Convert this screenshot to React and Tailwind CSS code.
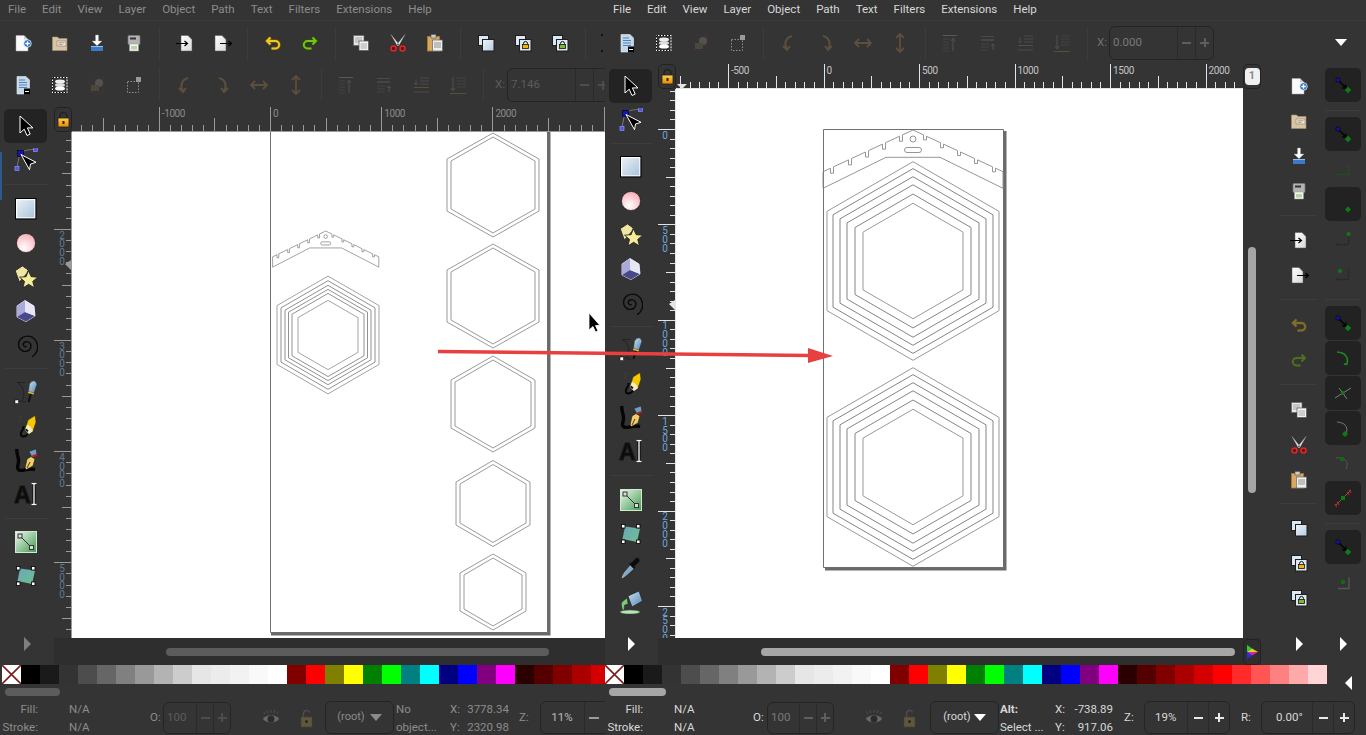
import React from "react";

const FONT = "font-['Roboto','Noto_Sans',sans-serif]";

const S = ({ children, s = 24, cls = "" }) => (
  <svg width={s} height={s} viewBox="0 0 24 24" className={"block shrink-0 " + cls}>{children}</svg>
);

/* ---------- command icons ---------- */
const New = () => <S><path d="M5 4.500h8l4 4v11.500H5z" fill="#fafafa" stroke="#aaa" strokeWidth=".5" /><path d="M13 4.500v4h4" fill="#ccc" /><circle cx="16.500" cy="12.500" r="3.800" fill="#2f73bd" stroke="#fff" strokeWidth=".7" /><path d="M14.300 12.500h4.400M16.500 10.300v4.400" stroke="#fff" strokeWidth="1.300" /></S>;
const Open = () => <S><path d="M4.500 8V6h5l1.500 1.500h8v12h-14.500z" fill="#d8c5a6" stroke="#a79172" strokeWidth=".6" /><rect x="9" y="10" width="9" height="5" fill="#f0e9dc" stroke="#8a7a60" strokeWidth=".6" /><path d="M10.500 11.800h6M10.500 13.400h4" stroke="#8a7a60" strokeWidth=".7" /></S>;
const Save = () => <S><path d="M10.500 4h3v6h3.500l-5 4.800-5-4.800h3.500z" fill="#fff" stroke="#999" strokeWidth=".4" /><rect x="6" y="15" width="12" height="5" fill="#3b7ac8" /><path d="M6 15.500h12" stroke="#93bfea" /></S>;
const Print = () => <S><rect x="6" y="4.500" width="12" height="9" rx="1" fill="#b3b3b3" stroke="#7a7a7a" strokeWidth=".7" /><rect x="8" y="6.500" width="6" height="2" fill="#333" /><rect x="7.500" y="13" width="9" height="7" fill="#f4f4f4" stroke="#999" strokeWidth=".5" /><rect x="9" y="15" width="6" height="3.500" fill="#b4d6a0" /></S>;
const Import = () => <S><path d="M8 4.500h7l4 4V20H8z" fill="url(#pg)" stroke="#555" strokeWidth=".5" /><path d="M3 12.500h11M11.500 10l3 2.500-3 2.500" stroke="#000" strokeWidth="1.200" fill="none" /></S>;
const Export = () => <S><path d="M5 4.500h7l4 4V20H5z" fill="url(#pg)" stroke="#555" strokeWidth=".5" /><path d="M10 12.500h11M18.500 10l3 2.500-3 2.500" stroke="#000" strokeWidth="1.200" fill="none" /></S>;
const UR = ({ c, o }) => (<g><path d="M9.500 6.500 6 10l3.500 3.500M6.500 10h8a3.700 3.700 0 0 1 0 7.400H10.500" stroke={o} strokeWidth="3.400" fill="none" /><path d="M9.500 6.500 6 10l3.500 3.500M6.500 10h8a3.700 3.700 0 0 1 0 7.400H10.500" stroke={c} strokeWidth="2" fill="none" /></g>);
const Undo = ({ cls = "" }) => <S cls={cls}><UR c="#f0c820" o="#6b5510" /></S>;
const Redo = ({ cls = "" }) => <S cls={cls}><g transform="translate(24 0) scale(-1 1)"><UR c="#76c410" o="#2c4c08" /></g></S>;
const Copy = () => <S><rect x="4.500" y="4.500" width="10.500" height="10" fill="#e8e8e8" stroke="#666" strokeWidth=".7" /><path d="M6 7h7M6 9h7M6 11h7" stroke="#888" strokeWidth=".7" /><rect x="10" y="10" width="9.500" height="9.500" fill="#f4f4f4" stroke="#555" strokeWidth=".7" /><path d="M11.500 13h6.500M11.500 15h6.500M11.500 17h6.500" stroke="#888" strokeWidth=".7" /></S>;
const Cut = () => <S><path d="M5 3.500 13 13.500l-1.500 1.500zM19 3.500 11 13.500l1.500 1.500z" fill="#f2f2f2" stroke="#999" strokeWidth=".4" /><circle cx="7.500" cy="17.500" r="2.500" fill="#5a1515" stroke="#e62525" strokeWidth="1.500" /><circle cx="16.500" cy="17.500" r="2.500" fill="#5a1515" stroke="#e62525" strokeWidth="1.500" /></S>;
const Paste = () => <S><rect x="4.500" y="5.500" width="12" height="14.500" fill="#d9a860" stroke="#a97a32" strokeWidth=".8" /><rect x="8" y="3.500" width="5" height="3.500" fill="#ccc" stroke="#555" strokeWidth=".6" /><rect x="9.500" y="9" width="10" height="11" fill="#eee" stroke="#666" strokeWidth=".7" /><path d="M11 12h7M11 14h7M11 16h7" stroke="#777" strokeWidth=".8" /></S>;
const Dup = () => <S><rect x="4.500" y="4.500" width="10" height="10" fill="#dbe7f2" stroke="#1d1d1d" /><rect x="8.500" y="8.500" width="11.500" height="11.500" fill="url(#dup)" stroke="#1d1d1d" /></S>;
const Clone = () => <S><rect x="4.500" y="4.500" width="10" height="10" fill="#dbe7f2" stroke="#1d1d1d" /><rect x="8.500" y="8.500" width="11.500" height="11.500" fill="#dbe7f2" stroke="#1d1d1d" /><path d="M12.500 13.500v-1a2 2 0 0 1 4 0v1" stroke="#111" fill="none" /><rect x="11.500" y="13.500" width="6" height="4" fill="#f5b400" stroke="#111" strokeWidth=".8" /></S>;
const Unlink = () => <S><rect x="4.500" y="4.500" width="10" height="10" fill="#dbe7f2" stroke="#1d1d1d" /><rect x="8.500" y="8.500" width="11.500" height="11.500" fill="#dbe7f2" stroke="#1d1d1d" /><path d="M12.500 13.500v-1a2 2 0 0 1 4 0v1" stroke="#111" fill="none" /><rect x="11.500" y="13.500" width="6" height="4" fill="#7ab82e" stroke="#111" strokeWidth=".8" /></S>;
const Dots = () => <div className="ml-[9px] flex flex-col gap-[14px]"><div className="w-[2px] h-[2px] bg-[#111]" /><div className="w-[2px] h-[2px] bg-[#111]" /></div>;

/* second row */
const DocProps = () => <S><path d="M6 3.500h9l3.500 3.500v14H6z" fill="#c4d8ea" stroke="#eee" strokeWidth=".6" /><path d="M8 7h6M8 9.500h8M8 12h8M8 14.500h8" stroke="#3f7db8" strokeWidth=".9" /><rect x="13" y="15.500" width="6" height="6" fill="#000" /><path d="M14 18.500h4" stroke="#fff" /></S>;
const Layers = () => <S><rect x="4.500" y="4.500" width="14.500" height="15" fill="none" stroke="#fff" /><rect x="4.500" y="4.500" width="14.500" height="15" fill="none" stroke="#000" strokeDasharray="1.500 1.500" /><ellipse cx="12" cy="8.500" rx="5" ry="2" fill="#eee" /><ellipse cx="12" cy="12" rx="5" ry="2" fill="#ddd" /><ellipse cx="12" cy="15.500" rx="5" ry="2" fill="#fff" /></S>;
const Group = () => <S cls="opacity-60"><rect x="4.500" y="4.500" width="14" height="15" fill="none" stroke="#6b2f2f" strokeWidth=".7" strokeDasharray="1.500 1" /><circle cx="14" cy="10" r="4" fill="#666" /><rect x="6" y="12" width="8" height="6" fill="#5d5542" /></S>;
const Ungroup = () => <S><rect x="5.500" y="8.500" width="11" height="11" fill="none" stroke="#8f8f8f" strokeDasharray="1.500 1.500" /><rect x="14" y="4" width="5" height="5" fill="#999" /></S>;
const Dimstroke = "#5e4e3e";
const RotL = () => <S><path d="M15 5C8 7 7 13 10 18" stroke={Dimstroke} strokeWidth="2" fill="none" /><path d="M6 15l4 4 3-4" stroke={Dimstroke} strokeWidth="2" fill="none" /></S>;
const RotR = () => <S><path d="M9 5c7 2 8 8 5 13" stroke={Dimstroke} strokeWidth="2" fill="none" /><path d="M18 15l-4 4-3-4" stroke={Dimstroke} strokeWidth="2" fill="none" /></S>;
const FlipH = () => <S><path d="M4 12h16M8 8l-4 4 4 4M16 8l4 4-4 4" stroke={Dimstroke} strokeWidth="1.800" fill="none" /></S>;
const FlipV = () => <S><path d="M12 3v18M8 7l4-4 4 4M8 17l4 4 4-4" stroke={Dimstroke} strokeWidth="1.800" fill="none" /></S>;
const Stack = ({ v }) => (
  <S cls="opacity-70">
    {v === 0 && <><path d="M4 4.500h14" stroke="#6a6a6a" /><path d="M4 8h6M4 11h6M4 14h6M4 17h6M4 20h6" stroke="#4b4b4b" /><path d="M14 20V8M12 10l2-3 2 3" stroke="#5c5c5c" fill="none" /></>}
    {v === 1 && <><path d="M5 5.500h13" stroke="#555" /><path d="M5 9h13" stroke="#6a6a6a" /><path d="M5 13h8M5 16h8M5 19h8" stroke="#4b4b4b" /><path d="M17 19v-6M15 15l2-2 2 2" stroke="#5c5c5c" fill="none" /></>}
    {v === 2 && <><path d="M11 5h9M11 8h9M11 11h9" stroke="#555" /><path d="M5 14.500h15" stroke="#6a5a3f" /><path d="M7 6v6M5 10l2 2 2-2" stroke="#555" fill="none" /><path d="M5 19h15" stroke="#5c5340" /></>}
    {v === 3 && <><path d="M11 5h9M11 8h9M11 11h9M11 14h9" stroke="#4b4b4b" /><path d="M7 4v13M5 15l2 3 2-3" stroke="#5c5c5c" fill="none" /><path d="M4 20.500h16" stroke="#6a5a3f" /></>}
  </S>
);

/* ---------- tools ---------- */
const Selector = () => <S><path d="M6 2v17l4.200-3.800 2.800 6.300 3.200-1.400-2.800-6.200h5.600z" fill="#000" stroke="#fff" strokeWidth="1" /></S>;
const Node = () => <S><path d="M7 5C8 3 14 1.500 20 1.500M5.500 7 3 19" stroke="#777" fill="none" /><rect x="1" y="18.500" width="4" height="4" fill="#5555dd" stroke="#8f8fff" strokeWidth=".7" /><rect x="19.500" y="-.500" width="4" height="4" fill="#5555dd" stroke="#8f8fff" strokeWidth=".7" /><rect x="3.500" y="2.500" width="6" height="6" fill="#1414b8" stroke="#000" strokeWidth=".6" /><path d="M7 6.500 22 14.300 16.500 16 15.500 21.700z" fill="#000" stroke="#fff" strokeWidth="1" /></S>;
const RectT = () => <S><rect x="2.500" y="2.500" width="18.500" height="18.500" fill="url(#rc)" stroke="#fff" strokeWidth="1.400" /><rect x="1.500" y="1.500" width="20.500" height="20.500" fill="none" stroke="#000" /></S>;
const Circ = () => <S><circle cx="12" cy="12" r="9.500" fill="url(#ci)" stroke="#111" strokeWidth=".6" /></S>;
const Star = () => <S><g transform="translate(-2.400 -1.500) scale(1.200)"><path d="M3 6l6-4 5 3.500-1.500 3-6 7z" fill="#efe4a0" stroke="#222" strokeWidth=".7" /><path d="M14 6l2.300 5 5.500.400-4.200 3.500 1.400 5.400-4.800-3-4.700 3 1.300-5.400-4.200-3.500 5.500-.400z" fill="#f5ec9a" stroke="#222" strokeWidth=".7" /></g></S>;
const Box3 = () => <S><path d="M11 1.500 20 7l1 10-9 5.500L3 18V7z" fill="#ddd" stroke="#fff" strokeWidth=".8" /><path d="M3 7l8-5.500V13L3 18z" fill="#a9a9dc" /><path d="M3 18l8-5 10 4-9 5.500z" fill="#48488c" /><path d="M11 1.500 20 7l1 10-10-4z" fill="#e6e6f4" /></S>;
const Spiral = () => <S><g transform="translate(-3.500 -3.500) scale(1.300)"><path d="M12.500 13c-1.500.8-3-.5-2.600-2 .5-2 3.600-2.200 5-.5 1.800 2.200.4 5.500-2.400 6.200-3.500.8-6.500-2-6.300-5.400.3-4.300 4.600-7 8.700-6 4.800 1.300 7 6.500 5.500 11-.7 2-2 3.600-3.800 4.700" fill="none" stroke="#0a0a0a" strokeWidth="1.100" /></g></S>;
const Pen = () => <S><path d="M3 2.500h8M4 3c5 3 8 10 4 18H3M8 22h4" stroke="#222" strokeWidth="1" fill="none" /><path d="M14.500 22 17 13.500" stroke="#111" strokeWidth="2" /><path d="M14.500 11.500 15.500 4 Q18 0 21 1 L23 4 20 13z" fill="url(#nb)" stroke="#222" strokeWidth=".4" /><path d="M14.300 11.500l5.700 1.500-.6 1.500-5.500-1.500z" fill="#e7b820" /><rect x="1" y="20" width="3.500" height="3.500" fill="#fff" stroke="#000" strokeWidth=".5" /></S>;
const Pencil = () => <S><path d="M4 2h4l-3 6" stroke="#3f3f3f" strokeWidth=".9" fill="none" /><path d="M14 20C10 24 6 23 7 19s3-3 2.500-7" stroke="#050505" strokeWidth="2" fill="none" /><path d="M11 16 14 6 21 1.500 22 8 19 17 15 20z" fill="#f5c800" stroke="#222" strokeWidth=".5" /><path d="M11 16l2-5c2.500.3 4.500 2.500 6 6l-4 3z" fill="#f8e9c9" /><path d="M11 16l1-1.500 2.500 2-1 1.500z" fill="#111" /></S>;
const Calli = () => <S><path d="M3 1C2 6 5 9 4.500 14 4 18 2 21 6 22.500 10 23 14 20 21 21.500" stroke="#050505" strokeWidth="3.400" fill="none" /><path d="M11 20 13 11 17 8.500 21 11 19 18 12.500 21.500z" fill="#f0cd68" stroke="#111" strokeWidth=".6" /><path d="M13 20l3-6" stroke="#111" strokeWidth=".8" /><path d="M15 3.500 22 1 23 7 18 9z" fill="#6f9fc6" stroke="#111" strokeWidth=".4" /><path d="M18 7.500l5-2 .3 2-4.500 2z" fill="#c61d1d" /></S>;
const TextT = () => <S><text x="0" y="20.500" fontFamily="'Liberation Sans',sans-serif" fontSize="23" fontWeight="700" fill="#0a0a0a" stroke="#161616" strokeWidth="1.100">A</text><path d="M17.500 1.500h5M17.500 22.500h5M20 1.500v21" stroke="#000" strokeWidth="3" /><path d="M17.500 1.500h5M17.500 22.500h5M20 1.500v21" stroke="#fff" strokeWidth="1.300" /></S>;
const Grad = () => <S><rect x="1.500" y="1.500" width="21" height="21" fill="url(#gd)" stroke="#cfeacf" strokeWidth="1" /><path d="M6 6l12 12" stroke="#333" /><rect x="4" y="4" width="4" height="4" fill="#ddd" stroke="#333" /><rect x="15.500" y="15.500" width="4" height="4" fill="#ddd" stroke="#333" /></S>;
const Mesh = () => <S><path d="M6 4.500 21 6.500 18 20 3.500 17z" fill="url(#ms)" /><rect x="2.500" y="2.500" width="3.500" height="3.500" fill="#fff" stroke="#000" strokeWidth=".8" /><rect x="17.500" y="2.500" width="3.500" height="3.500" fill="#fff" stroke="#000" strokeWidth=".8" /><rect x="2.500" y="18" width="3.500" height="3.500" fill="#fff" stroke="#000" strokeWidth=".8" /><rect x="17.500" y="18" width="3.500" height="3.500" fill="#fff" stroke="#000" strokeWidth=".8" /></S>;
const Dropper = () => <S><path d="M3 22c1-3 1.500-4 3-6l6-7 3 3-7 6.500c-2 1.500-3 2.500-5 3.500z" fill="#7aa9d0" stroke="#ddd" strokeWidth=".5" /><path d="M12 7l5-5c2-1 4.500 1 3.500 3.500l-5 5 1 1.500-1.500 1-5-5 1-1.500z" fill="#0c0c0c" stroke="#333" strokeWidth=".4" /></S>;
const Bucket = () => <S><ellipse cx="11" cy="22" rx="10" ry="2" fill="#b8e2b8" stroke="#2d5b2d" strokeWidth=".5" /><path d="M9 6 20 1 23.500 11 13 17z" fill="url(#nb)" stroke="#111" strokeWidth=".6" /><path d="M8 8l-5 4c-1 2-.5 4 .5 8h1.500l.5-5 3.500-1z" fill="#7cc97c" stroke="#222" strokeWidth=".4" /></S>;

/* ---------- snap icons ---------- */
const SnapNode = () => <S><path d="M8 8l6.500 6.500M14.800 11.500v3.500h-3.500" stroke="#000" strokeWidth="1.400" fill="none" /><circle cx="7" cy="7" r="2.200" fill="#1515a8" stroke="#000" strokeWidth=".6" /><path d="M17 14l3 3-3 3-3-3z" fill="#107a10" stroke="#083" strokeWidth=".4" /></S>;
const SnapBBox = ({ c = "#1a5a1a" }) => <S><path d="M6 17.500h11.500V6" stroke={c} strokeWidth="1.300" strokeDasharray="1.300 1.300" fill="none" /></S>;
const SnapBBoxDark = ({ children }) => <S><path d="M5 17.500h12.500V6" stroke="#222" strokeWidth="1.300" strokeDasharray="1.300 1.300" fill="none" />{children}</S>;
const SnapCurve = ({ c = "#1f8a1f" }) => <S><path d="M6 6c7 .5 12 4 10 12-1 .8-2.500 0-3-.5" stroke={c} strokeWidth="1.600" fill="none" /></S>;
const SnapCross = () => <S><path d="M4 17 20 7M8 7l8 11" stroke="#888" strokeWidth=".9" /><circle cx="12" cy="12" r="2" fill="#107a10" /></S>;
const SnapCurveGray = () => <S><path d="M6 6c7 .5 12 4 9 12" stroke="#777" fill="none" /><path d="M14 15l3 3-3 3-3-3z" fill="#107a10" /></S>;
const SnapCurveDim = () => <S><path d="M5 7c8-1 14 3 10 11" stroke="#555" fill="none" /><rect x="9" y="6" width="4" height="4" fill="#0f6b0f" /></S>;
const SnapRed = () => <S><path d="M4 20 20 4" stroke="#666" /><path d="M4 18l2 3M6 16l2 3M16 6l2 3M18 4l2 3" stroke="#c02020" strokeWidth="1.300" /><rect x="10" y="10" width="4" height="4" fill="#107a10" /></S>;
const SnapBox = () => <S><path d="M7 18.500h11v-11" stroke="#555" strokeWidth="1.400" fill="none" /><circle cx="12" cy="12" r="2.300" fill="#0f6b0f" /></S>;

/* ---------- shared chrome ---------- */
const Btn = ({ children }) => <div className="w-[37px] h-full flex items-center justify-center shrink-0">{children}</div>;
const Sep = () => <div className="w-[14px] h-full flex items-center justify-center shrink-0"><div className="w-px h-[32px] bg-[#3c3c3c]" /></div>;

const Menu = ({ text }) => (
  <div className={"h-[21px] shrink-0 flex items-center gap-[16px] pl-[8px] text-[11.5px] border-b border-[#3a3a3a] " + text}>
    <span>File</span><span>Edit</span><span>View</span><span>Layer</span><span>Object</span><span>Path</span><span>Text</span><span>Filters</span><span>Extensions</span><span>Help</span>
  </div>
);

const SecondRow = () => (
  <>
    <Btn><DocProps /></Btn><Btn><Layers /></Btn><Btn><Group /></Btn><Btn><Ungroup /></Btn><Sep />
    <Btn><RotL /></Btn><Btn><RotR /></Btn><Btn><FlipH /></Btn><Btn><FlipV /></Btn><Sep />
    <Btn><Stack v={0} /></Btn><Btn><Stack v={1} /></Btn><Btn><Stack v={2} /></Btn><Btn><Stack v={3} /></Btn><Sep />
  </>
);

const SpinBox = ({ w, h = "h-[34px]", value, btn, text, pad = "pl-[3px]", seg = "w-[18px]" }) => (
  <div className={"flex items-stretch border border-[#242424] rounded-[6px] shrink-0 text-[11.5px] " + w + " " + h + " " + text}>
    <div className={"flex-1 flex items-center " + pad}>{value}</div>
    <div className={"border-l border-[#2a2a2a] flex items-center justify-center " + seg + " " + btn}>
      <div className="w-[9px] h-[2px] bg-current" />
    </div>
    <div className={"border-l border-[#2a2a2a] flex items-center justify-center relative " + seg + " " + btn}>
      <div className="w-[9px] h-[2px] bg-current" />
      <div className="absolute w-[2px] h-[9px] bg-current" />
    </div>
  </div>
);

const ToolBtn = ({ on, children }) => (
  <div className={"h-[34px] w-[43px] ml-[4px] flex items-center justify-center rounded-[5px] shrink-0 " + (on ? "bg-[#232323]" : "")}>{children}</div>
);
const ToolSep = ({ h }) => <div className={"flex items-center ml-[5px] w-[43px] shrink-0 " + h}><div className="h-px w-full bg-[#3d3d3d]" /></div>;
const Tri = ({ cls }) => <div className={"w-0 h-0 border-y-[7px] border-y-transparent border-l-[7px] " + cls} />;

const Lock = () => (
  <div className="w-[18px] h-full rounded-[5px] border border-[#222] flex items-center justify-center shrink-0">
    <svg width="13" height="17" viewBox="0 0 13 17"><path d="M3 7V5a3.500 3.500 0 0 1 7 0v2" stroke="#222" strokeWidth="1.600" fill="none" /><rect x="1" y="7" width="11" height="9" fill="url(#lk)" stroke="#222" strokeWidth=".8" /><rect x="5.500" y="10" width="2" height="3" fill="#222" /></svg>
  </div>
);

/* ---------- rulers ---------- */
const range = (n) => Array.from({ length: n }, (_, i) => i);
const HRuler = ({ w, h, x0, zero, step, first, inc, count, tick, label, med, min, marker }) => (
  <svg width={w} height={h} className="block shrink-0 flex-1" shapeRendering="crispEdges">
    {range(count * 10 + 30).map((i) => {
      const x = Math.round(zero - x0 + (first + i / 10) * step);
      if (x < 0 || x > w) return null;
      const k = i % 10;
      return <line key={i} x1={x + 0.5} x2={x + 0.5} y1={k === 0 ? 0 : k === 5 ? med : min} y2={h} stroke={tick} />;
    })}
    <line x1="0" x2={w} y1={h - 0.5} y2={h - 0.5} stroke={tick} />
    {range(count).map((i) => {
      const x = zero - x0 + (first + i) * step;
      if (x < 0 || x > w - 5) return null;
      return <text key={i} x={x + 3} y="9.500" fontSize="10" letterSpacing="-.4" fontFamily="Roboto,sans-serif" fill={label} shapeRendering="auto">{(first + i) * inc}</text>;
    })}
    {marker && <path d={marker} fill={tick} shapeRendering="auto" />}
  </svg>
);
const VRuler = ({ w, h, y0, zero, step, first, inc, count, tick, label, marker, med, min, labelX }) => (
  <svg width={w} height={h} className="block shrink-0" shapeRendering="crispEdges">
    {range(count * 10 + 20).map((i) => {
      const y = Math.round(zero - y0 + (first + i / 10) * step);
      if (y < 0 || y > h) return null;
      const k = i % 10;
      return <line key={i} y1={y + 0.5} y2={y + 0.5} x1={k === 0 ? 0 : k === 5 ? med : min} x2={w} stroke={tick} />;
    })}
    <line x1={w - 0.5} x2={w - 0.5} y1="0" y2={h} stroke={tick} />
    {range(count).map((i) => {
      const y = zero - y0 + (first + i) * step;
      if (y < 0 || y > h) return null;
      const digits = String((first + i) * inc).split("");
      return digits.map((d, j) => <text key={i + "-" + j} x={labelX} y={y + 9.500 + j * 8.800} fontSize="10" textAnchor="middle" fontFamily="Roboto,sans-serif" fill={label} shapeRendering="auto">{d}</text>);
    })}
    <path d={marker} fill={tick} shapeRendering="auto" />
  </svg>
);

/* ---------- artwork ---------- */
const hex = (cx, cy, w, h) => `${cx},${cy - h} ${cx + w},${cy - h / 2} ${cx + w},${cy + h / 2} ${cx},${cy + h} ${cx - w},${cy + h / 2} ${cx - w},${cy - h / 2}`;
const Hex = ({ cx, cy, w, h, c = "#8f8f8f", sw = 0.9 }) => <polygon points={hex(cx, cy, w, h)} fill="none" stroke={c} strokeWidth={sw} />;
const notch = [81, 63, 46, 29, 12];
const roofTop = () => {
  const k = 41.7 / 90;
  let d = "M-90 41.700";
  notch.forEach((n) => { d += ` L${-n - 1.5} ${(n + 1.5) * k} V${(n + 1.5) * k + 5} H${-n + 1.5} V${(n - 1.5) * k}`; });
  d += " L0 0";
  [...notch].reverse().forEach((n) => { d += ` L${n - 1.5} ${(n - 1.5) * k} V${(n - 1.5) * k + 5} H${n + 1.5} V${(n + 1.5) * k}`; });
  return d + " L90 41.700 V58.300 L27 27.300 H-27 L-90 58.300 Z";
};
const Roof = ({ t, sw, c = "#8a8a8a" }) => (
  <g transform={t} fill="none" stroke={c} strokeWidth={sw}>
    <path d={roofTop()} />
    <circle cx="0" cy="9" r="3" />
    <rect x="-8.500" y="17.500" width="17" height="5" rx="2.500" />
  </g>
);
const Rings = ({ cx, cy, list, sw }) => list.map((w, i) => <Hex key={w} cx={cx} cy={cy} w={w} h={w / 0.866} c={i === 0 || i === list.length - 1 ? "#999999" : "#858585"} sw={sw} />);

/* ---------- palette ---------- */
const base = ["bg-[#000000]", "bg-[#1a1a1a]", "bg-[#333333]", "bg-[#4d4d4d]", "bg-[#666666]", "bg-[#808080]", "bg-[#999999]", "bg-[#b3b3b3]", "bg-[#cccccc]", "bg-[#e6e6e6]", "bg-[#ececec]", "bg-[#f2f2f2]", "bg-[#f9f9f9]", "bg-[#ffffff]", "bg-[#800000]", "bg-[#ff0000]", "bg-[#808000]", "bg-[#ffff00]", "bg-[#008000]", "bg-[#00ff00]", "bg-[#008080]", "bg-[#00ffff]", "bg-[#000080]", "bg-[#0000ff]", "bg-[#800080]", "bg-[#ff00ff]", "bg-[#2b0000]", "bg-[#550000]", "bg-[#800000]", "bg-[#aa0000]", "bg-[#d40000]", "bg-[#ff0000]", "bg-[#ff2a2a]", "bg-[#ff5555]", "bg-[#ff8080]", "bg-[#ffaaaa]", "bg-[#ffd5d5]"];
const Palette = ({ cls }) => (
  <div className={"h-[19px] flex overflow-hidden shrink-0 " + cls}>
    <svg width="19" height="19" className="block shrink-0 bg-white"><path d="M0 0 19 19M19 0 0 19" stroke="#7d1f1f" strokeWidth="1.600" /></svg>
    {base.map((c, i) => <div key={i} className={"w-[19px] h-full shrink-0 " + c} />)}
  </div>
);

const Fill = ({ w }) => (
  <div className={"shrink-0 flex text-[11.5px] leading-[18px] " + w}>
    <div className="w-[38px] text-right"><div>Fill:</div><div>Stroke:</div></div>
    <div className="ml-[31px]"><div>N/A</div><div>N/A</div></div>
  </div>
);

const Eye = () => <S><path d="M4 13c3-5 13-5 16 0-3 4.500-13 4.500-16 0z" fill="#777" /><circle cx="12" cy="13" r="3.500" fill="#2a2a2a" /><path d="M6 8 4.500 5.500M9 7 8 4M12 6.500V3.500M15 7l1-3M18 8l1.500-2.500" stroke="#555" /></S>;
const Pad = () => <S><rect x="6" y="11" width="11" height="10" fill="#6a6038" stroke="#444" strokeWidth=".6" /><path d="M8.500 11V7.500a3.200 3.200 0 0 1 6.200-1" stroke="#555" strokeWidth="1.400" fill="none" /><circle cx="11.500" cy="15.500" r="1.500" fill="#222" /></S>;

const Defs = () => (
  <svg width="0" height="0" className="absolute">
    <defs>
      <linearGradient id="pg" x1="0" y1="0" x2="1" y2="1"><stop offset="0" stopColor="#fff" /><stop offset="1" stopColor="#d8d8d8" /></linearGradient>
      <linearGradient id="dup" x1="0" y1="0" x2="1" y2="1"><stop offset="0" stopColor="#eef3f8" /><stop offset="1" stopColor="#b6cee4" /></linearGradient>
      <linearGradient id="rc" x1="0" y1="0" x2="1" y2="1"><stop offset="0" stopColor="#e9f0f6" /><stop offset="1" stopColor="#a9c4da" /></linearGradient>
      <radialGradient id="ci" cx=".4" cy=".75" r=".8"><stop offset="0" stopColor="#fff" /><stop offset=".5" stopColor="#fdd5da" /><stop offset="1" stopColor="#f6a9b2" /></radialGradient>
      <linearGradient id="nb" x1="0" y1="0" x2="1" y2="1"><stop offset="0" stopColor="#cfe2ef" /><stop offset="1" stopColor="#4f86b4" /></linearGradient>
      <linearGradient id="gd" x1="0" y1="0" x2="1" y2="1"><stop offset="0" stopColor="#f0f8f0" /><stop offset="1" stopColor="#3f9a4f" /></linearGradient>
      <linearGradient id="ms" x1="0" y1="0" x2="1" y2="1"><stop offset="0" stopColor="#6aa6b8" /><stop offset="1" stopColor="#6fc08f" /></linearGradient>
      <linearGradient id="lk" x1="0" y1="0" x2="0" y2="1"><stop offset="0" stopColor="#ffd04a" /><stop offset="1" stopColor="#e88a00" /></linearGradient>
    </defs>
  </svg>
);

const LeftWindow = () => (
  <div className="w-[605px] h-[735px] shrink-0 flex flex-col overflow-hidden bg-[#343434]">
    <Menu text="text-[#8c8c8c]" />
    <div className="h-[44px] shrink-0 flex items-center pl-[4px]">
      <Btn><New /></Btn><Btn><Open /></Btn><Btn><Save /></Btn><Btn><Print /></Btn><Sep />
      <Btn><Import /></Btn><Btn><Export /></Btn><Sep />
      <Btn><Undo /></Btn><Btn><Redo /></Btn><Sep />
      <Btn><Copy /></Btn><Btn><Cut /></Btn><Btn><Paste /></Btn><Sep />
      <Btn><Dup /></Btn><Btn><Clone /></Btn><Btn><Unlink /></Btn><Sep /><Dots />
    </div>
    <div className="h-[40px] shrink-0 flex items-center pl-[4px]">
      <SecondRow />
      <span className="text-[11.5px] text-[#5c5c5c] ml-[5px] w-[12px] shrink-0">X:</span>
      <SpinBox w="w-[105px]" value="7.146" text="text-[#5c5c5c]" btn="text-[#4d4d4d]" />
    </div>
    <div className="flex-1 min-h-0 flex">
      <div className="w-[54px] shrink-0 flex flex-col pt-[4px] relative">
        <div className="absolute left-0 top-[47px] h-[48px] w-[2px] bg-[#2c5a8a]" />
        <ToolBtn on><Selector /></ToolBtn>
        <ToolBtn><Node /></ToolBtn>
        <ToolSep h="h-[15px]" />
        <ToolBtn><RectT /></ToolBtn><ToolBtn><Circ /></ToolBtn><ToolBtn><Star /></ToolBtn><ToolBtn><Box3 /></ToolBtn><ToolBtn><Spiral /></ToolBtn>
        <ToolSep h="h-[13px]" />
        <ToolBtn><Pen /></ToolBtn><ToolBtn><Pencil /></ToolBtn><ToolBtn><Calli /></ToolBtn><ToolBtn><TextT /></ToolBtn>
        <ToolSep h="h-[14px]" />
        <ToolBtn><Grad /></ToolBtn><ToolBtn><Mesh /></ToolBtn>
        <div className="mt-auto h-[42px] flex items-center pl-[24px]"><Tri cls="border-l-[#808080]" /></div>
      </div>
      <div className="flex-1 min-w-0 flex flex-col pt-[2px]">
        <div className="h-[25px] shrink-0 flex"><Lock /><HRuler w={533} h={25} x0={72} zero={270} step={111.2} first={-2} inc={1000} count={5} tick="#9a9a9a" label="#8a8a8a" med={11} min={18} /></div>
        <div className="flex-1 min-h-0 flex">
          <VRuler w={18} h={506} y0={132} zero={6.8} step={111.1} first={1} inc={1000} count={5} tick="#9a9a9a" label="#64798c" med={8} min={12} labelX={8} marker="M11 132 L17 128 V138 Z" />
          <svg width="533" height="506" viewBox="72 132 533 506" className="block bg-white shrink-0">
            <path d="M270.500 132V632.500H547.500V132" fill="none" stroke="#707070" />
            <path d="M549 132V634H271" fill="none" stroke="#6a6a6a" strokeWidth="3" />
            <Hex cx={493} cy={185} w={46} h={52} /><Hex cx={493} cy={185} w={42} h={48} />
            <Hex cx={493} cy={296} w={46} h={52} /><Hex cx={493} cy={296} w={42} h={48} />
            <Hex cx={493} cy={404} w={42} h={48} /><Hex cx={493} cy={404} w={38} h={44} />
            <Hex cx={493} cy={503.5} w={37} h={43} /><Hex cx={493} cy={503.5} w={33} h={39} />
            <Hex cx={493} cy={592} w={33} h={38} /><Hex cx={493} cy={592} w={29} h={34} />
            <Roof t="translate(325.700 231) scale(.59 .62)" sw="1.300" />
            <Rings cx={328} cy={335} list={[51, 47, 43, 39.5, 36, 30]} sw=".9" />
          </svg>
        </div>
        <div className="h-[27px] shrink-0 flex items-center bg-[#2e2e2e]"><div className="ml-[112px] w-[383px] h-[8px] rounded-full bg-[#5c5c5c]" /></div>
      </div>
    </div>
    <Palette cls="pl-[2px]" />
    <div className="h-[16px] shrink-0 flex items-center pl-[5px]"><div className="w-[55px] h-[8px] rounded-full bg-[#5c5c5c]" /></div>
    <div className="h-[35px] shrink-0 flex items-center text-[#8c8c8c]">
      <Fill w="w-[150px]" />
      <span className="text-[11.5px] w-[13px] shrink-0">O:</span>
      <SpinBox w="w-[68px]" h="h-[32px]" value="100" text="text-[#5c5c5c]" btn="text-[#4d4d4d]" seg="w-[17px]" />
      <div className="w-[22px] shrink-0" />
      <div className="w-[36px] flex justify-center shrink-0 opacity-80"><Eye /></div>
      <div className="w-[36px] flex justify-center shrink-0 opacity-80"><Pad /></div>
      <div className="w-[69px] h-[33px] shrink-0 border border-[#242424] rounded-[6px] flex items-center justify-center gap-[5px] text-[11px]">(root)<div className="w-0 h-0 border-x-[6px] border-x-transparent border-t-[7px] border-t-[#8c8c8c]" /></div>
      <div className="ml-[2px] w-[54px] shrink-0 text-[11.5px] leading-[18px]"><div>No</div><div>object...</div></div>
      <div className="w-[12px] shrink-0 text-[11.5px] leading-[18px]"><div>X:</div><div>Y:</div></div>
      <div className="w-[47px] shrink-0 text-right text-[11.5px] leading-[18px]"><div>3778.34</div><div>2320.98</div></div>
      <span className="ml-[10px] w-[21px] shrink-0 text-[11.5px]">Z:</span>
      <div className="w-[90px] h-[33px] shrink-0 border border-[#242424] rounded-[6px] flex items-center text-[11.5px] text-[#bbbbbb]"><span className="w-[44px] text-center ml-[-1px]">11%</span><div className="w-px h-full bg-[#2a2a2a]" /><div className="ml-[4px] w-[10px] h-[2px] bg-[#9a9a9a]" /></div>
    </div>
  </div>
);

const Cmd = ({ children }) => <div className="h-[35px] w-[36px] flex items-center justify-center shrink-0">{children}</div>;
const CmdSep = ({ h }) => <div className={"w-[36px] flex items-center shrink-0 " + h}><div className="w-full h-px bg-[#3d3d3d]" /></div>;
const Snap = ({ on, children }) => <div className="h-[35px] shrink-0 flex items-start"><div className={"h-[34px] w-[36px] rounded-[5px] flex items-center justify-center " + (on ? "bg-[#222222]" : "")}>{children}</div></div>;

const RightWindow = () => (
  <div className="w-[761px] h-[735px] shrink-0 flex flex-col overflow-hidden bg-[#343434]">
    <Menu text="text-[#d8d8d8]" />
    <div className="h-[43px] shrink-0 flex items-center pl-[3px]">
      <SecondRow />
      <span className="text-[11.5px] text-[#6e6e6e] ml-[3px] w-[12px] shrink-0">X:</span>
      <SpinBox w="w-[105px]" value="0.000" text="text-[#7a7a7a]" btn="text-[#5e5e5e]" />
      <div className="ml-[121px] w-0 h-0 border-x-[6px] border-x-transparent border-t-[7px] border-t-white" />
    </div>
    <div className="flex-1 min-h-0 flex">
      <div className="w-[53px] shrink-0 flex flex-col pt-[5px]">
        <ToolBtn on><Selector /></ToolBtn>
        <ToolBtn><Node /></ToolBtn>
        <ToolSep h="h-[13px]" />
        <ToolBtn><RectT /></ToolBtn><ToolBtn><Circ /></ToolBtn><ToolBtn><Star /></ToolBtn><ToolBtn><Box3 /></ToolBtn><ToolBtn><Spiral /></ToolBtn>
        <ToolSep h="h-[12px]" />
        <ToolBtn><Pen /></ToolBtn><ToolBtn><Pencil /></ToolBtn><ToolBtn><Calli /></ToolBtn><ToolBtn><TextT /></ToolBtn>
        <ToolSep h="h-[15px]" />
        <ToolBtn><Grad /></ToolBtn><ToolBtn><Mesh /></ToolBtn><ToolBtn><Dropper /></ToolBtn><ToolBtn><Bucket /></ToolBtn>
        <div className="mt-auto h-[42px] flex items-center pl-[23px]"><Tri cls="border-l-white" /></div>
      </div>
      <div className="w-[603px] shrink-0 flex flex-col">
        <div className="h-[25px] shrink-0 flex">
          <Lock />
          <HRuler w={567} h={25} x0={676} zero={823.5} step={95.5} first={-2} inc={500} count={7} tick="#e4e4e4" label="#c4c4c4" med={12} min={18} marker="M1 20H11L6 25Z" />
          <div className="w-[18px] shrink-0 rounded-[5px] border border-[#222] flex items-center justify-center">
            <div className="w-[15px] h-[17px] rounded-[4px] bg-[#f0f0f0] flex items-center justify-center text-[11px] font-bold text-[#8a8a8a]">1</div>
          </div>
        </div>
        <div className="flex-1 min-h-0 flex">
          <VRuler w={18} h={549} y0={89} zero={129} step={95.4} first={-1} inc={500} count={7} tick="#e4e4e4" label="#6ea6df" med={8} min={12} labelX={7} marker="M11 215 L17 211 V221 Z" />
          <svg width="567" height="549" viewBox="676 89 567 549" className="block bg-white shrink-0">
            <path d="M823.500 129.500H1003.500V567.500H823.500Z" fill="none" stroke="#707070" />
            <path d="M1005 131V569H825" fill="none" stroke="#6a6a6a" strokeWidth="3" />
            <Roof t="translate(913 130)" sw=".9" />
            <Rings cx={913} cy={261} list={[86, 80, 73, 66, 58, 50]} sw="1" />
            <Rings cx={913} cy={467} list={[86, 80, 73, 66, 58, 50]} sw="1" />
          </svg>
          <div className="w-[18px] shrink-0"><div className="ml-[5px] mt-[158px] w-[8px] h-[246px] rounded-full bg-[#a6a6a6]" /></div>
        </div>
        <div className="h-[27px] shrink-0 flex items-center bg-[#2e2e2e]">
          <div className="ml-[103px] w-[474px] h-[8px] rounded-full bg-[#a6a6a6]" />
          <div className="ml-[8px] w-[18px] h-[26px] rounded-[5px] border border-[#222] flex items-center justify-center">
            <svg width="14" height="18" viewBox="0 0 14 18"><path d="M2 2 7 5.500 2 9z" fill="#1fd03f" /><path d="M7 5.500 13 9H2z" fill="#e0d020" /><path d="M2 9H13L7 12.500z" fill="#e020a0" /><path d="M2 9 7 12.500 2 16z" fill="#2030f0" /></svg>
          </div>
        </div>
      </div>
      <div className="w-[59px] shrink-0 flex flex-col pl-[20px] pt-[4px]">
        <Cmd><New /></Cmd><Cmd><Open /></Cmd><Cmd><Save /></Cmd><Cmd><Print /></Cmd>
        <CmdSep h="h-[14px]" />
        <Cmd><Import /></Cmd><Cmd><Export /></Cmd>
        <CmdSep h="h-[15px]" />
        <Cmd><Undo cls="opacity-40" /></Cmd><Cmd><Redo cls="opacity-40" /></Cmd>
        <CmdSep h="h-[15px]" />
        <Cmd><Copy /></Cmd><Cmd><Cut /></Cmd><Cmd><Paste /></Cmd>
        <CmdSep h="h-[13px]" />
        <Cmd><Dup /></Cmd><Cmd><Clone /></Cmd><Cmd><Unlink /></Cmd>
        <div className="mt-auto h-[42px] flex items-center pl-[15px]"><Tri cls="border-l-white" /></div>
      </div>
      <div className="w-[46px] shrink-0 flex flex-col pl-[5px] pt-[4px]">
        <Snap on><SnapNode /></Snap>
        <CmdSep h="h-[14px]" />
        <Snap on><SnapNode /></Snap>
        <Snap><SnapBBox /></Snap>
        <Snap on><SnapBBoxDark><path d="M17 14.500l3 3-3 3-3-3z" fill="#107a10" /></SnapBBoxDark></Snap>
        <Snap><SnapBBoxDark><circle cx="17.500" cy="7" r="2" fill="#107a10" /></SnapBBoxDark></Snap>
        <Snap><SnapBBoxDark><circle cx="9" cy="9" r="2" fill="#107a10" /></SnapBBoxDark></Snap>
        <CmdSep h="h-[14px]" />
        <Snap on><SnapNode /></Snap>
        <Snap on><SnapCurve /></Snap>
        <Snap on><SnapCross /></Snap>
        <Snap on><SnapCurveGray /></Snap>
        <Snap><SnapCurveDim /></Snap>
        <Snap on><SnapRed /></Snap>
        <CmdSep h="h-[14px]" />
        <Snap on><SnapNode /></Snap>
        <Snap><SnapBox /></Snap>
        <div className="mt-auto h-[42px] flex items-center pl-[15px]"><Tri cls="border-l-white" /></div>
      </div>
    </div>
    <div className="h-[35px] shrink-0 flex">
      <div className="w-[723px] shrink-0">
        <Palette cls="" />
        <div className="h-[16px] flex items-center pl-[4px]"><div className="w-[57px] h-[8px] rounded-full bg-[#a6a6a6]" /></div>
      </div>
      <div className="flex-1 flex items-center justify-center pl-[3px]"><div className="w-0 h-0 border-y-[7px] border-y-transparent border-r-[7px] border-r-white" /></div>
    </div>
    <div className="h-[35px] shrink-0 flex items-center text-[#d8d8d8]">
      <Fill w="w-[148px]" />
      <span className="text-[11.5px] w-[14px] shrink-0">O:</span>
      <SpinBox w="w-[67px]" h="h-[32px]" value="100" text="text-[#7a7a7a]" btn="text-[#5e5e5e]" seg="w-[17px]" />
      <div className="w-[22px] shrink-0" />
      <div className="w-[36px] flex justify-center shrink-0 opacity-80"><Eye /></div>
      <div className="w-[36px] flex justify-center shrink-0 opacity-80"><Pad /></div>
      <div className="ml-[2px] w-[69px] h-[33px] shrink-0 border border-[#242424] rounded-[6px] flex items-center justify-center gap-[3px] text-[11px]">(root)<div className="w-0 h-0 border-x-[6px] border-x-transparent border-t-[7px] border-t-white" /></div>
      <div className="ml-[1px] w-[55px] shrink-0 text-[11.5px] leading-[18px]"><div className="font-bold">Alt:</div><div>Select ...</div></div>
      <div className="w-[12px] shrink-0 text-[11.5px] leading-[18px]"><div>X:</div><div>Y:</div></div>
      <div className="w-[46px] shrink-0 text-right text-[11.5px] leading-[18px]"><div>-738.89</div><div>917.06</div></div>
      <span className="ml-[11px] w-[20px] shrink-0 text-[11.5px]">Z:</span>
      <SpinBox w="w-[86px]" h="h-[33px]" value="19%" pad="pl-[10px]" text="text-[#d8d8d8]" btn="text-[#e8e8e8]" seg="w-[21px]" />
      <span className="ml-[11px] w-[20px] shrink-0 text-[11.5px]">R:</span>
      <SpinBox w="w-[94px]" h="h-[33px]" value="0.00°" pad="pl-[14px]" text="text-[#d8d8d8]" btn="text-[#e8e8e8]" seg="w-[21px]" />
    </div>
  </div>
);

export default function App() {
  return (
    <div className={"relative w-[1366px] h-[735px] flex overflow-hidden " + FONT}>
      <Defs />
      <LeftWindow />
      <RightWindow />
      <svg width="1366" height="735" className="absolute left-0 top-0 pointer-events-none">
        <path d="M438 351.500 812 355.500" stroke="#e8403f" strokeWidth="3.600" fill="none" />
        <path d="M808 348 833 356 808 363z" fill="#e8403f" />
        <path d="M589 313v17l4-3.500 2.500 5.500 2.500-1-2.500-5.500H600z" fill="#000" stroke="#fff" strokeWidth=".8" />
      </svg>
    </div>
  );
}
